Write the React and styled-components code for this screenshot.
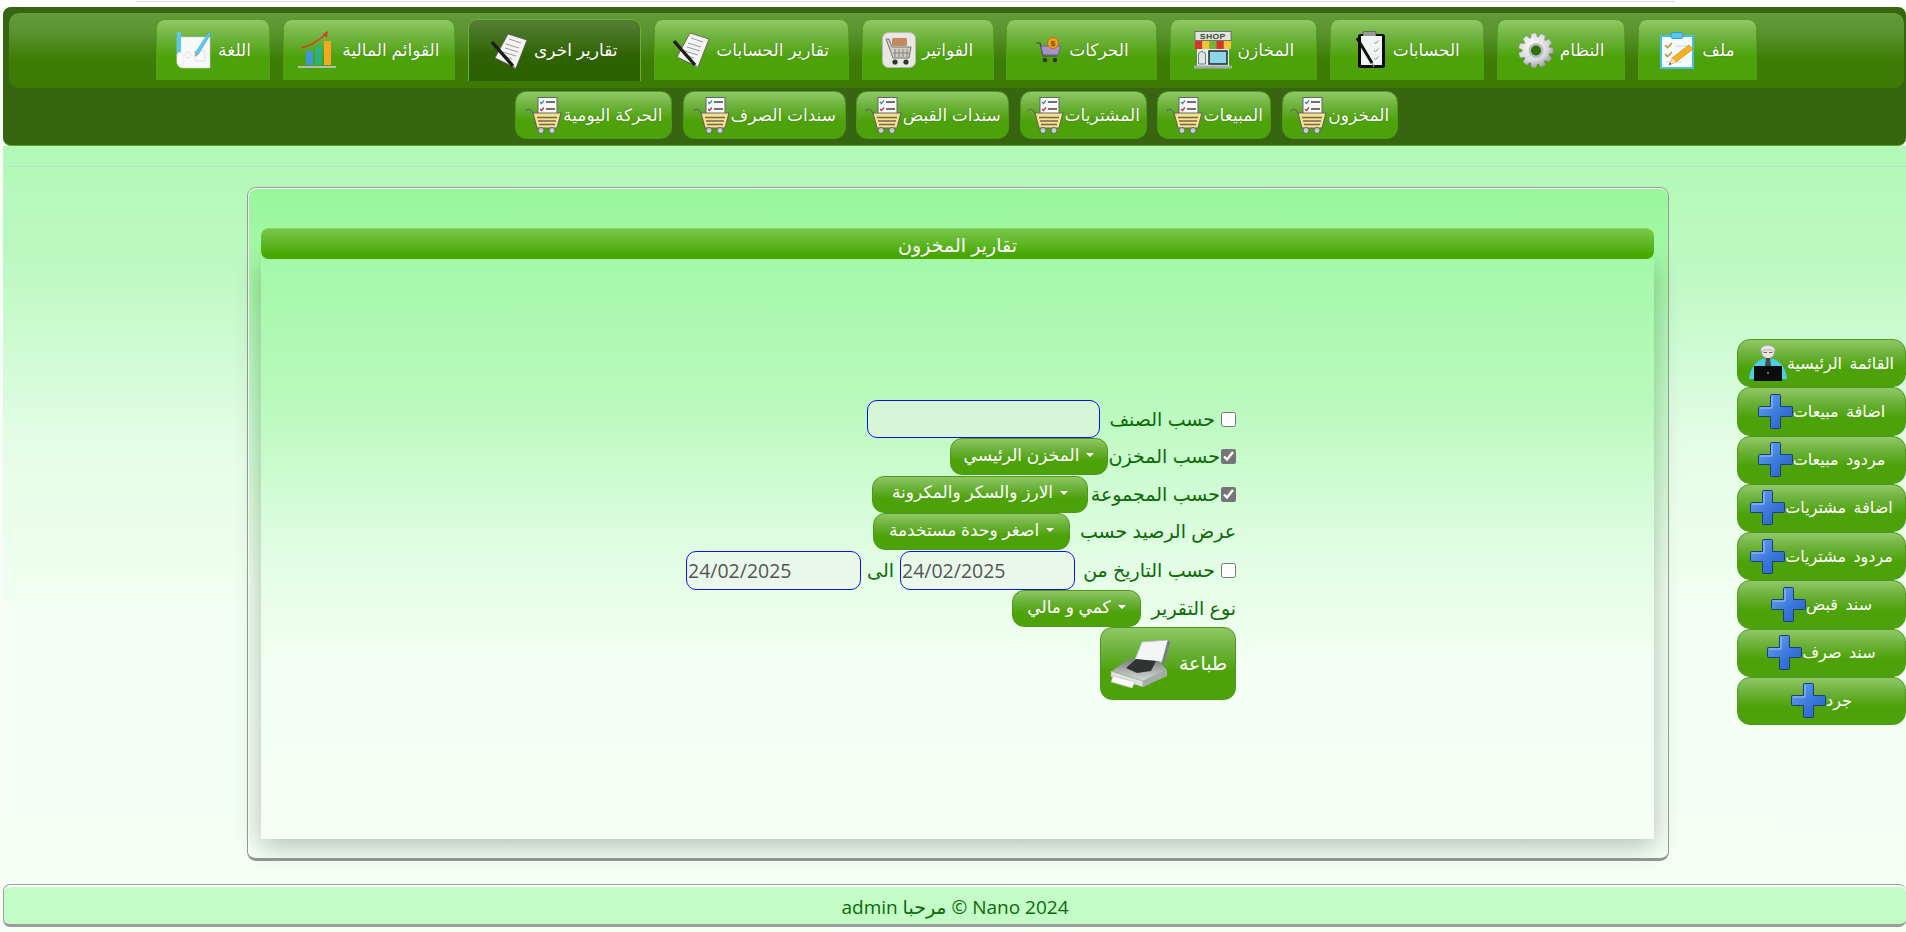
import React from "react"
import styled, { createGlobalStyle } from "styled-components"

const GlobalStyle = createGlobalStyle`
  html, body {
    margin: 0;
    padding: 0;
    height: 100%;
    background: #f8fbf8;
    overflow: hidden;
  }
  body {
    font-family: "Liberation Sans", "DejaVu Sans", sans-serif;
  }
`

const btnGradient = "linear-gradient(to bottom, #8fc866 0%, #6db23c 30%, #4da20a 62%, #4da10a 100%)"

const Page = styled.div`
  width: 1903px;
  height: 932px;
  margin-left: 3px;
  display: flex;
  flex-direction: column;
  direction: rtl;
`

const TopStrip = styled.div`
  height: 7px;
  flex: none;
  background: #fff;
  margin-left: -3px;
  display: flex;
  justify-content: flex-start;
  padding-left: 136px;
  direction: ltr;
`

const StripBox = styled.div`
  width: 1539px;
  height: 1px;
  background: #fff;
  border-bottom: 1px solid #d5d5d5;
`

const Header = styled.header`
  flex: none;
  height: 139px;
  box-sizing: border-box;
  background: #376510;
  border-radius: 8px;
  border-bottom: 1px solid #5aa52c;
  padding: 6px 2px 0 6px;
`

const TabBar = styled.nav`
  height: 75px;
  box-sizing: border-box;
  border-radius: 10px;
  padding-top: 6px;
  display: flex;
  justify-content: center;
  gap: 12.9px;
  background: linear-gradient(to bottom, #639a3a 0%, #5a9430 25%, #3d7d05 62%, #3c7a05 100%);
`

const Tab = styled.a`
  width: ${({ $w }) => $w}px;
  height: ${({ $active }) => ($active ? 62 : 61)}px;
  box-sizing: border-box;
  display: flex;
  align-items: center;
  justify-content: center;
  gap: 6px;
  color: #fff;
  font-size: 17px;
  white-space: nowrap;
  border-radius: 9px 9px 0 0;
  border: 1px solid ${({ $active }) => ($active ? "#6dad3a" : "#559f1d")};
  border-bottom: 0;
  text-shadow: 0 0 1px #2c5a00;
  background: ${({ $active }) =>
    $active
      ? "linear-gradient(to bottom, #557f35 0%, #2f6203 60%, #2a5f00 100%)"
      : btnGradient};
`

const SubBar = styled.div`
  display: flex;
  justify-content: center;
  gap: 10.5px;
  padding-top: 3px;
`

const SubButton = styled.a`
  width: ${({ $w }) => $w}px;
  height: 48px;
  box-sizing: border-box;
  display: flex;
  align-items: center;
  justify-content: center;
  color: #fff;
  font-size: 17px;
  white-space: nowrap;
  border-radius: 11px;
  border: 1px solid #4d9a1a;
  text-shadow: 0 0 1px #2c5a00;
  background: ${btnGradient};
`

const Body = styled.div`
  flex: 1;
  display: flex;
  flex-direction: column;
  background: linear-gradient(to bottom, #b2f8b8 0px, #bdf9c2 120px, #e4fde6 300px, #f3fff3 480px, #f5fff5 100%);
`

const Spacer = styled.div`
  height: 20px;
  flex: none;
  border-bottom: 1px solid #b9e6bc;
`

const Main = styled.main`
  flex: none;
  height: 674px;
  margin-top: 20px;
  display: flex;
  direction: ltr;
  padding-left: 244px;
  gap: 68px;
`

const Panel = styled.section`
  width: 1422px;
  height: 674px;
  box-sizing: border-box;
  direction: rtl;
  border: 1px solid #9a9a9a;
  border-bottom: 3px solid #969696;
  border-radius: 9px;
  padding: 40px 14px 0 13px;
  background: linear-gradient(to bottom, #98f79b 0%, #a8f8ac 15%, #c4fbc8 32%, #eefeef 60%, #f5fff5 100%);
  box-shadow: inset 0 1px 0 #fff, inset 1px 0 0 #fff;
`

const PanelTitle = styled.h2`
  margin: 0;
  height: 31px;
  box-sizing: border-box;
  text-align: center;
  color: #fff;
  font-size: 19px;
  font-weight: normal;
  line-height: 33px;
  border-radius: 8px;
  border-top: 1px solid #86d948;
  background: linear-gradient(to bottom, #78c54c 0%, #5eb825 50%, #4bae00 85%, #4bae00 100%);
`

const PanelBody = styled.div`
  height: 580px;
  box-sizing: border-box;
  padding: 141px 418px 0 0;
  box-shadow: 0 7px 24px rgba(40, 60, 40, 0.32);
  background: linear-gradient(to bottom, #a4f8a8 0%, #baf9be 25%, #e0fde2 50%, #f3fff3 70%, #f6fff6 100%);
`

const Row = styled.div`
  display: flex;
  align-items: center;
  height: ${({ $h }) => $h}px;
  gap: ${({ $gap }) => $gap}px;
`

const Label = styled.label`
  color: #0b6a05;
  font-size: 19px;
  white-space: nowrap;
  flex: none;
  width: ${({ $w }) => ($w ? `${$w}px` : "auto")};
`

const Check = styled.input.attrs({ type: "checkbox" })`
  width: 15px;
  height: 15px;
  margin: 0;
  flex: none;
  accent-color: #767676;
`

const TextInput = styled.input`
  width: ${({ $w }) => $w}px;
  height: ${({ $h }) => $h}px;
  box-sizing: border-box;
  flex: none;
  border: 1px solid #1010f0;
  border-radius: 10px;
  background: rgba(240, 242, 240, 0.48);
  color: #555;
  font-family: "Open Sans", sans-serif;
  font-size: 19.5px;
  padding: 0 1px;
  direction: ltr;
  text-align: left;
  outline: none;
`

const Select = styled.button`
  width: ${({ $w }) => $w}px;
  height: 37px;
  box-sizing: border-box;
  flex: none;
  display: flex;
  align-items: center;
  justify-content: center;
  gap: 7px;
  color: #fff;
  font-family: inherit;
  font-size: 17px;
  white-space: nowrap;
  padding: 0 0 3px;
  border-radius: 12px;
  border: 1px solid #4d9a1a;
  background: ${btnGradient};
`

const Caret = styled.span`
  width: 0;
  height: 0;
  border-left: 4px solid transparent;
  border-right: 4px solid transparent;
  border-top: 4px solid #fff;
`

const PrintButton = styled.button`
  width: 136px;
  height: 73px;
  box-sizing: border-box;
  display: flex;
  align-items: center;
  justify-content: center;
  gap: 8px;
  color: #fff;
  font-family: inherit;
  font-size: 19px;
  padding: 0;
  border-radius: 12px;
  border: 1px solid #4d9a1a;
  background: ${btnGradient};
`

const SideMenu = styled.aside`
  width: 169px;
  margin-top: 152px;
  direction: rtl;
  display: flex;
  flex-direction: column;
`

const SideButton = styled.a`
  height: 48.25px;
  box-sizing: border-box;
  display: flex;
  align-items: center;
  justify-content: center;
  color: #fff;
  font-size: 16px;
  word-spacing: 3px;
  white-space: nowrap;
  border-radius: 13px;
  border: 1px solid #4d9a1a;
  background: ${btnGradient};
`

const Footer = styled.footer`
  flex: none;
  height: 43px;
  margin-top: 23px;
  margin-bottom: 5px;
  box-sizing: border-box;
  border: 1px solid #a0a0a0;
  border-right: 0;
  border-bottom: 3px solid #9c9c9c;
  border-radius: 7px;
  box-shadow: inset 0 1px 0 #fff, inset 0 2px 0 #fff;
  background: #c4fcc8;
  color: #0b6a05;
  font-family: "Open Sans", "DejaVu Sans", sans-serif;
  font-size: 19px;
  display: flex;
  align-items: center;
  justify-content: center;
  padding-top: 5px;
`

const gearPath = (() => {
  const pts = []
  const teeth = 11
  for (let i = 0; i < teeth; i++) {
    const a = (i / teeth) * Math.PI * 2
    const step = (Math.PI * 2) / teeth
    const at = [
      [13.5, -0.5],
      [17.5, -0.28],
      [17.5, 0.28],
      [13.5, 0.5],
    ]
    at.forEach(([r, o]) => {
      const t = a + o * step * 0.85
      pts.push(`${(18 + r * Math.cos(t)).toFixed(1)},${(18 + r * Math.sin(t)).toFixed(1)}`)
    })
  }
  return pts.join(" ")
})()

const ClipboardIcon = () => (
  <svg width="36" height="37" viewBox="0 0 36 37">
    <rect x="1" y="4" width="32" height="32" fill="#f4fafd" stroke="#4bbbe8" strokeWidth="2" />
    <rect x="11" y="0.5" width="12" height="6" rx="2" fill="#5cc6ee" stroke="#2f9ccb" />
    <path d="M5 13l2.5 2.5L12 11M5 22l2.5 2.5L12 20" fill="none" stroke="#b99a3a" strokeWidth="1.6" />
    <path d="M15 14h13M15 23h6M6 30h16" stroke="#d8e3ea" strokeWidth="1.4" />
    <path d="M9 33l3-7L29 13l4 4-17 13z" fill="#f5b21d" stroke="#c98a10" strokeWidth="0.7" />
    <path d="M9 33l3-7 4 4z" fill="#f1e3c3" />
    <path d="M9 33l1-2.5 1.5 1.5z" fill="#445" />
  </svg>
)

const GearIcon = () => (
  <svg width="36" height="37" viewBox="0 0 36 36">
    <defs>
      <radialGradient id="gearFill" cx="40%" cy="35%" r="75%">
        <stop offset="0" stopColor="#ffffff" />
        <stop offset="0.6" stopColor="#d7d7de" />
        <stop offset="1" stopColor="#85858f" />
      </radialGradient>
    </defs>
    <polygon points={gearPath} fill="url(#gearFill)" stroke="#8a8a92" strokeWidth="0.4" />
    <circle cx="18" cy="18" r="7.5" fill="#b9b9c1" />
    <circle cx="18" cy="18" r="5" fill="#2f6f05" />
  </svg>
)

const LedgerIcon = () => (
  <svg width="32" height="38" viewBox="0 0 32 38">
    <rect x="3" y="3" width="27" height="34" rx="2.5" fill="#0c0c0c" />
    <rect x="8" y="0.5" width="13" height="5" rx="1" fill="#9a9a9a" stroke="#333" strokeWidth="0.5" />
    <rect x="6" y="5" width="21" height="29" fill="#f2f4f4" />
    <path d="M19 11l1.5 1.5 3-3M19 19l1.5 1.5 3-3M19 27l1.5 1.5 3-3" fill="none" stroke="#6f94b8" strokeWidth="1" />
    <path d="M2 7l15 25" stroke="#111" strokeWidth="3" />
    <path d="M17 32l2 4" stroke="#888" strokeWidth="1.4" />
  </svg>
)

const ShopIcon = () => (
  <svg width="38" height="38" viewBox="0 0 38 38">
    <rect x="1" y="0.5" width="36" height="9" fill="#e4e4e4" stroke="#555" strokeWidth="0.7" />
    <text x="19" y="8" textAnchor="middle" fontSize="8" fontFamily="Liberation Sans, sans-serif" fill="#333" letterSpacing="0.8" direction="ltr">SHOP</text>
    <rect x="1" y="10" width="7.2" height="8" fill="#d6342d" />
    <rect x="8.2" y="10" width="7.2" height="8" fill="#f2c62f" />
    <rect x="15.4" y="10" width="7.2" height="8" fill="#7bb13b" />
    <rect x="22.6" y="10" width="7.2" height="8" fill="#d6342d" />
    <rect x="29.8" y="10" width="7.2" height="8" fill="#f2c62f" />
    <rect x="3" y="18" width="32" height="17" fill="#e9eded" />
    <rect x="15" y="20" width="18" height="13" fill="#8fd5e8" stroke="#26333a" strokeWidth="1.6" />
    <path d="M4.5 33V24a3.5 3.5 0 017 0v9z" fill="#dfe6e8" stroke="#6c7a80" />
    <rect x="0" y="34.5" width="38" height="3" fill="#a5acae" />
  </svg>
)

const CoinCartIcon = () => (
  <svg width="28" height="26" viewBox="0 0 28 26">
    <path d="M1 6h4l3 13h14" fill="none" stroke="#444" strokeWidth="1.2" />
    <path d="M6 9h20l-3 9H8z" fill="#a493c8" stroke="#6d5f93" />
    <circle cx="18" cy="6" r="5.5" fill="#f4a31c" stroke="#b96e08" />
    <text x="18" y="9" textAnchor="middle" fontSize="8" fontFamily="Liberation Sans, sans-serif" fill="#8a4f05" direction="ltr">$</text>
    <circle cx="10" cy="23" r="2.2" fill="#333" />
    <circle cx="20" cy="23" r="2.2" fill="#333" />
  </svg>
)

const TileCartIcon = () => (
  <svg width="34" height="36" viewBox="0 0 34 36">
    <rect x="0.5" y="0.5" width="33" height="35" rx="6" fill="#e9e7e2" stroke="#b9b7b0" />
    <rect x="10" y="6" width="15" height="8" rx="1.5" fill="#c48a5f" />
    <path d="M4 7h3l3 8h19l-2 11H11z" fill="#cfcdc7" stroke="#77756f" />
    <path d="M13 17v8M17 17v8M21 17v8M25 17v8M11 21h16" stroke="#77756f" strokeWidth="0.8" />
    <circle cx="13" cy="30" r="2.6" fill="#333" />
    <circle cx="24" cy="30" r="2.6" fill="#333" />
  </svg>
)

const ReportIcon = () => (
  <svg width="37" height="36" viewBox="0 0 37 36">
    <path d="M17 1l19 6-11 28L4 25z" fill="#f4f4f2" stroke="#555" strokeWidth="0.8" />
    <path d="M18 6l12 4M15 11l13 4M14 15l13 4M12 19l13 4M11 23l10 3" stroke="#9a9a9a" strokeWidth="1" />
    <path d="M1 9l21 24" stroke="#1c1c1c" strokeWidth="3.4" />
    <path d="M22 33l2.5 2.5" stroke="#999" strokeWidth="1.4" />
  </svg>
)

const ChartIcon = () => (
  <svg width="38" height="38" viewBox="0 0 38 38">
    <rect x="8" y="20" width="7" height="14" fill="#3f95d9" />
    <rect x="17" y="15" width="7" height="19" fill="#2bb37a" />
    <rect x="26" y="10" width="7" height="24" fill="#f5a623" />
    <rect x="0" y="35" width="38" height="2" fill="#b8bcb8" />
    <path d="M3 17C12 15 20 10 28 3" fill="none" stroke="#d93a2b" strokeWidth="1.6" />
    <path d="M30 0l-1 7-4-4z" fill="#d93a2b" />
  </svg>
)

const LanguageIcon = () => (
  <svg width="37" height="38" viewBox="0 0 37 38">
    <path d="M2 6h33v31H8c-4 0-6-3-6-6z" fill="#f7f9fb" stroke="#c4ced5" strokeWidth="0.6" />
    <path d="M2 1h4v20C6 23 4 25 2 27z" fill="#58c8f2" />
    <path d="M2 25c0-5 6-5 6 0v8c0 2-6 2-6-2z" fill="#fff" stroke="#d6dde2" strokeWidth="0.6" />
    <rect x="20" y="20" width="10" height="10" fill="none" stroke="#dde3e7" />
    <circle cx="13" cy="24" r="3" fill="none" stroke="#dde3e7" />
    <path d="M20 22L34 1l2 1.5L23 24z" fill="#5cc7f0" stroke="#3a9fca" strokeWidth="0.5" />
    <path d="M20 22l3 2-3 2z" fill="#d8a33c" />
  </svg>
)

const ListCartIcon = () => (
  <svg width="38" height="37" viewBox="0 0 38 37">
    <rect x="13" y="0.5" width="19" height="20" fill="#f8f8f8" stroke="#5f6668" />
    <path d="M15 5l1.5 1.5L19 3.5" fill="none" stroke="#2c8f9c" strokeWidth="1.2" />
    <path d="M15 12l1.5 1.5L19 10.5" fill="none" stroke="#b8344b" strokeWidth="1.2" />
    <path d="M21 5h9M21 12h9" stroke="#444" strokeWidth="1.6" />
    <path d="M0.5 14c3-3 6-2 8 3" fill="none" stroke="#5f6668" strokeWidth="1.1" />
    <path d="M8 16h28l-4 15H12z" fill="#fbe08a" stroke="#5f6668" strokeWidth="1.1" />
    <path d="M12 20.5h20M13 24h18M14 27.5h16" stroke="#6d6a55" strokeWidth="1.4" />
    <circle cx="16" cy="33.5" r="3" fill="#c9cccc" stroke="#5f6668" />
    <circle cx="27" cy="33.5" r="3" fill="#c9cccc" stroke="#5f6668" />
  </svg>
)

const PlusIcon = () => (
  <svg width="35" height="35" viewBox="0 0 35 35">
    <defs>
      <linearGradient id="plusFill" x1="0" y1="0" x2="1" y2="1">
        <stop offset="0" stopColor="#6fa6ef" />
        <stop offset="0.55" stopColor="#3a78dc" />
        <stop offset="1" stopColor="#2a5fc0" />
      </linearGradient>
    </defs>
    <path
      d="M12.5 1.5a1 1 0 011-1h8a1 1 0 011 1v11h11a1 1 0 011 1v8a1 1 0 01-1 1h-11v11a1 1 0 01-1 1h-8a1 1 0 01-1-1v-11h-11a1 1 0 01-1-1v-8a1 1 0 011-1h11z"
      fill="url(#plusFill)"
      stroke="#1d3f78"
    />
    <path d="M14 2v12H2" fill="none" stroke="#9cc4f6" strokeWidth="1" />
  </svg>
)

const AdminIcon = () => (
  <svg width="38" height="38" viewBox="0 0 38 38">
    <path d="M0 35C1 25 6 18 13 15h12c7 3 12 10 13 20z" fill="#45d0e8" />
    <circle cx="19" cy="8" r="6.5" fill="#ece6da" stroke="#a0a0a0" />
    <path d="M11.5 8c-1-9 15-9 15 0-4-3-11-3-15 0z" fill="#e8e8e8" stroke="#8f8f8f" strokeWidth="0.6" />
    <path d="M14.5 8.5h3.5M20 8.5h3.5" stroke="#666" strokeWidth="1" />
    <path d="M17 14h4l1 8h-6z" fill="#4a4a4a" />
    <rect x="5" y="22" width="28" height="15" fill="#0c0c0c" />
    <circle cx="19" cy="29" r="1.2" fill="#666" />
  </svg>
)

const PrinterIcon = () => (
  <svg width="62" height="48" viewBox="0 0 62 48">
    <defs>
      <linearGradient id="printBody" x1="0" y1="0" x2="0" y2="1">
        <stop offset="0" stopColor="#7c807e" />
        <stop offset="1" stopColor="#d8dbd9" />
      </linearGradient>
    </defs>
    <path d="M33 2L59 0 53 22 25 22z" fill="#f4f5f6" stroke="#b9bcbd" />
    <path d="M59 0l2 2-5 21-3-1z" fill="#77807b" />
    <path d="M3 31L20 19 50 21 58 30 34 41z" fill="url(#printBody)" />
    <path d="M17 28L27 19 47 21 42 31 28 33z" fill="#303332" />
    <path d="M2 31l32 10v6L2 37z" fill="#dfe2e0" stroke="#9ea3a0" strokeWidth="0.6" />
    <path d="M34 41l24-11v6L34 47z" fill="#a7acaa" />
    <path d="M4 36l22 6-3 6-21-6z" fill="#fff" stroke="#b5b8b6" strokeWidth="0.6" />
    <circle cx="38" cy="41" r="1" fill="#57c98a" />
  </svg>
)

const TABS = [
  { label: "ملف", w: 119, Icon: ClipboardIcon },
  { label: "النظام", w: 128, Icon: GearIcon },
  { label: "الحسابات", w: 154, Icon: LedgerIcon },
  { label: "المخازن", w: 147, Icon: ShopIcon },
  { label: "الحركات", w: 151, Icon: CoinCartIcon },
  { label: "الفواتير", w: 132, Icon: TileCartIcon },
  { label: "تقارير الحسابات", w: 195, Icon: ReportIcon },
  { label: "تقارير اخرى", w: 173, Icon: ReportIcon, active: true },
  { label: "القوائم المالية", w: 172, Icon: ChartIcon },
  { label: "اللغة", w: 114, Icon: LanguageIcon },
]

const SUBS = [
  { label: "المخزون", w: 116 },
  { label: "المبيعات", w: 114 },
  { label: "المشتريات", w: 127 },
  { label: "سندات القبض", w: 153 },
  { label: "سندات الصرف", w: 163 },
  { label: "الحركة اليومية", w: 157 },
]

const SIDE = [
  "اضافة مبيعات",
  "مردود مبيعات",
  "اضافة مشتريات",
  "مردود مشتريات",
  "سند قبض",
  "سند صرف",
  "جرد",
]

export default function App() {
  return (
    <>
      <GlobalStyle />
      <Page>
        <TopStrip>
          <StripBox />
        </TopStrip>
        <Header>
          <TabBar>
            {TABS.map(({ label, w, Icon, active }) => (
              <Tab key={label} $w={w} $active={active}>
                {label}
                <Icon />
              </Tab>
            ))}
          </TabBar>
          <SubBar>
            {SUBS.map(({ label, w }) => (
              <SubButton key={label} $w={w}>
                {label}
                <ListCartIcon />
              </SubButton>
            ))}
          </SubBar>
        </Header>
        <Body>
          <Spacer />
          <Main>
            <Panel>
              <PanelTitle>تقارير المخزون</PanelTitle>
              <PanelBody>
                <Row $h={38} $gap={6}>
                  <Check />
                  <Label $w={109}>حسب الصنف</Label>
                  <TextInput $w={233} $h={38} />
                </Row>
                <Row $h={37} $gap={1}>
                  <Check defaultChecked />
                  <Label $w={111}>حسب المخزن</Label>
                  <Select $w={158}>
                    <Caret />
                    المخزن الرئيسي
                  </Select>
                </Row>
                <Row $h={38} $gap={1}>
                  <Check defaultChecked />
                  <Label $w={131}>حسب المجموعة</Label>
                  <Select $w={216}>
                    <Caret />
                    الارز والسكر والمكرونة
                  </Select>
                </Row>
                <Row $h={37} $gap={9}>
                  <Label $w={157}>عرض الرصيد حسب</Label>
                  <Select $w={197}>
                    <Caret />
                    اصغر وحدة مستخدمة
                  </Select>
                </Row>
                <Row $h={40} $gap={6}>
                  <Check />
                  <Label $w={134}>حسب التاريخ من</Label>
                  <TextInput $w={175} $h={39} defaultValue="24/02/2025" />
                  <Label $w={27}>الى</Label>
                  <TextInput $w={175} $h={39} defaultValue="24/02/2025" />
                </Row>
                <Row $h={37} $gap={9}>
                  <Label $w={86}>نوع التقرير</Label>
                  <Select $w={129}>
                    <Caret />
                    كمي و مالي
                  </Select>
                </Row>
                <Row $h={73} $gap={0}>
                  <PrintButton>
                    طباعة
                    <PrinterIcon />
                  </PrintButton>
                </Row>
              </PanelBody>
            </Panel>
            <SideMenu>
              <SideButton>
                القائمة الرئيسية
                <AdminIcon />
              </SideButton>
              {SIDE.map((label) => (
                <SideButton key={label}>
                  {label}
                  <PlusIcon />
                </SideButton>
              ))}
            </SideMenu>
          </Main>
          <Footer>
            <bdi dir="ltr">admin مرحبا © Nano 2024</bdi>
          </Footer>
        </Body>
      </Page>
    </>
  )
}
